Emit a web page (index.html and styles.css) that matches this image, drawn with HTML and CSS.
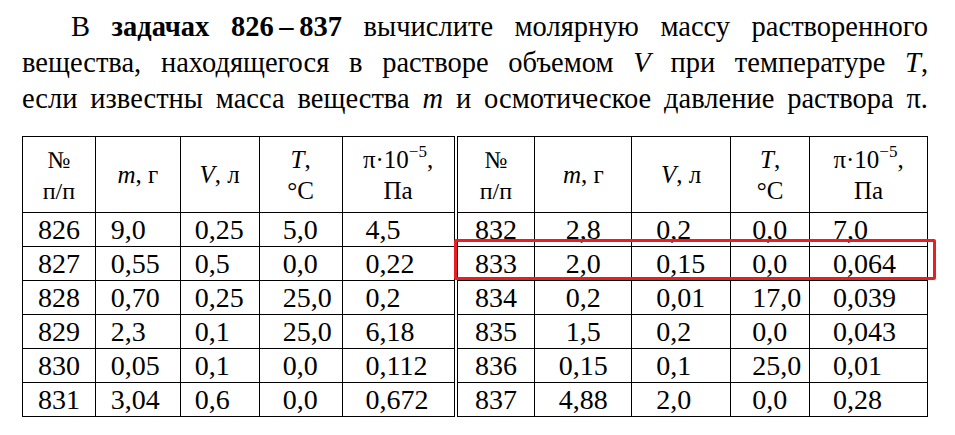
FILE: index.html
```html
<!DOCTYPE html>
<html lang="ru">
	<head>
		<meta charset="UTF-8" />
		<title>Задачи 826–837</title>
		<link rel="stylesheet" href="styles.css">
	</head>
	<body>
		<div class="page">
			<p class="task">
				В <b>задачах 826&thinsp;–&thinsp;837</b> вычислите молярную массу растворенного<br />
				вещества, находящегося в растворе объемом <i>V</i> при температуре <i>T</i>,<br />
				если известны масса вещества <i>m</i> и осмотическое давление раствора π.
			</p>

			<div class="tables">
				<table class="data data-left">
					<colgroup>
						<col style="width: 73px" />
						<col style="width: 85px" />
						<col style="width: 79px" />
						<col style="width: 83px" />
						<col style="width: 112px" />
					</colgroup>
					<tr class="head">
						<th class="num">№<br />п/п</th>
						<th><i>m</i>, г</th>
						<th><i>V</i>, л</th>
						<th><i>T</i>,<br />°C</th>
						<th>π·10<span class="exp">−5</span>,<br />Па</th>
					</tr>
					<tr><td>826</td><td>9,0</td><td>0,25</td><td>5,0</td><td>4,5</td></tr>
					<tr><td>827</td><td>0,55</td><td>0,5</td><td>0,0</td><td>0,22</td></tr>
					<tr><td>828</td><td>0,70</td><td>0,25</td><td>25,0</td><td>0,2</td></tr>
					<tr><td>829</td><td>2,3</td><td>0,1</td><td>25,0</td><td>6,18</td></tr>
					<tr><td>830</td><td>0,05</td><td>0,1</td><td>0,0</td><td>0,112</td></tr>
					<tr><td>831</td><td>3,04</td><td>0,6</td><td>0,0</td><td>0,672</td></tr>
				</table>

				<table class="data data-right">
					<colgroup>
						<col style="width: 78px" />
						<col style="width: 97px" />
						<col style="width: 99px" />
						<col style="width: 79px" />
						<col style="width: 118px" />
					</colgroup>
					<tr class="head">
						<th class="num">№<br />п/п</th>
						<th><i>m</i>, г</th>
						<th><i>V</i>, л</th>
						<th><i>T</i>,<br />°C</th>
						<th>π·10<span class="exp">−5</span>,<br />Па</th>
					</tr>
					<tr><td>832</td><td>2,8</td><td>0,2</td><td>0,0</td><td>7,0</td></tr>
					<tr><td>833</td><td>2,0</td><td>0,15</td><td>0,0</td><td>0,064</td></tr>
					<tr><td>834</td><td>0,2</td><td>0,01</td><td>17,0</td><td>0,039</td></tr>
					<tr><td>835</td><td>1,5</td><td>0,2</td><td>0,0</td><td>0,043</td></tr>
					<tr><td>836</td><td>0,15</td><td>0,1</td><td>25,0</td><td>0,01</td></tr>
					<tr><td>837</td><td>4,88</td><td>2,0</td><td>0,0</td><td>0,28</td></tr>
				</table>

				<!-- выделение задачи 833 -->
				<div class="mark"></div>
			</div>
		</div>
	</body>
</html>
```

FILE: styles.css
```css
body {
	margin: 0;
	background: #fff;
	color: #000;
	font-family: "Liberation Serif", "Times New Roman", serif;
}

.page {
	width: 906px;
	padding: 9px 0 0 22px;
}

.task {
	margin: 0 0 19px;
	font-size: 28.5px;
	line-height: 36px;
	text-indent: 49px;
	text-align: justify;
	text-align-last: justify;
}

.task b {
	font-weight: bold;
}

/* TABLEAUX */
.tables {
	display: flex;
	gap: 2px;
	position: relative;
}

.data {
	border-collapse: collapse;
	table-layout: fixed;
	border: 1px solid #000;
}

.data th,
.data td {
	border: 1px solid #000;
	padding: 0;
	white-space: nowrap;
}

.data th {
	height: 73px;
	font-size: 25px;
	font-weight: normal;
	line-height: 31px;
	text-align: center;
	vertical-align: middle;
}

.data td {
	height: 33px;
	font-size: 28px;
	line-height: 30px;
	text-align: left;
	vertical-align: middle;
}

.data th.num {
	font-size: 24px;
	padding-top: 2px;
}

.exp {
	font-size: 17px;
	vertical-align: 11px;
	line-height: 0;
}

.data td:nth-child(1) {
	text-align: center;
}

.data-left td:nth-child(2) {
	padding-left: 15px;
}

.data-left td:nth-child(3) {
	padding-left: 14px;
}

.data-left td:nth-child(4),
.data-left td:nth-child(5) {
	padding-left: 23px;
}

.data-right td:nth-child(2) {
	text-align: center;
}

.data-right td:nth-child(3) {
	padding-left: 24px;
}

.data-right td:nth-child(4) {
	padding-left: 21px;
}

.data-right td:nth-child(5) {
	padding-left: 23px;
}

.mark {
	position: absolute;
	left: 432px;
	top: 103px;
	width: 476px;
	height: 35px;
	border: 3px solid #ec1c24;
	border-radius: 2px;
	pointer-events: none;
}
```
